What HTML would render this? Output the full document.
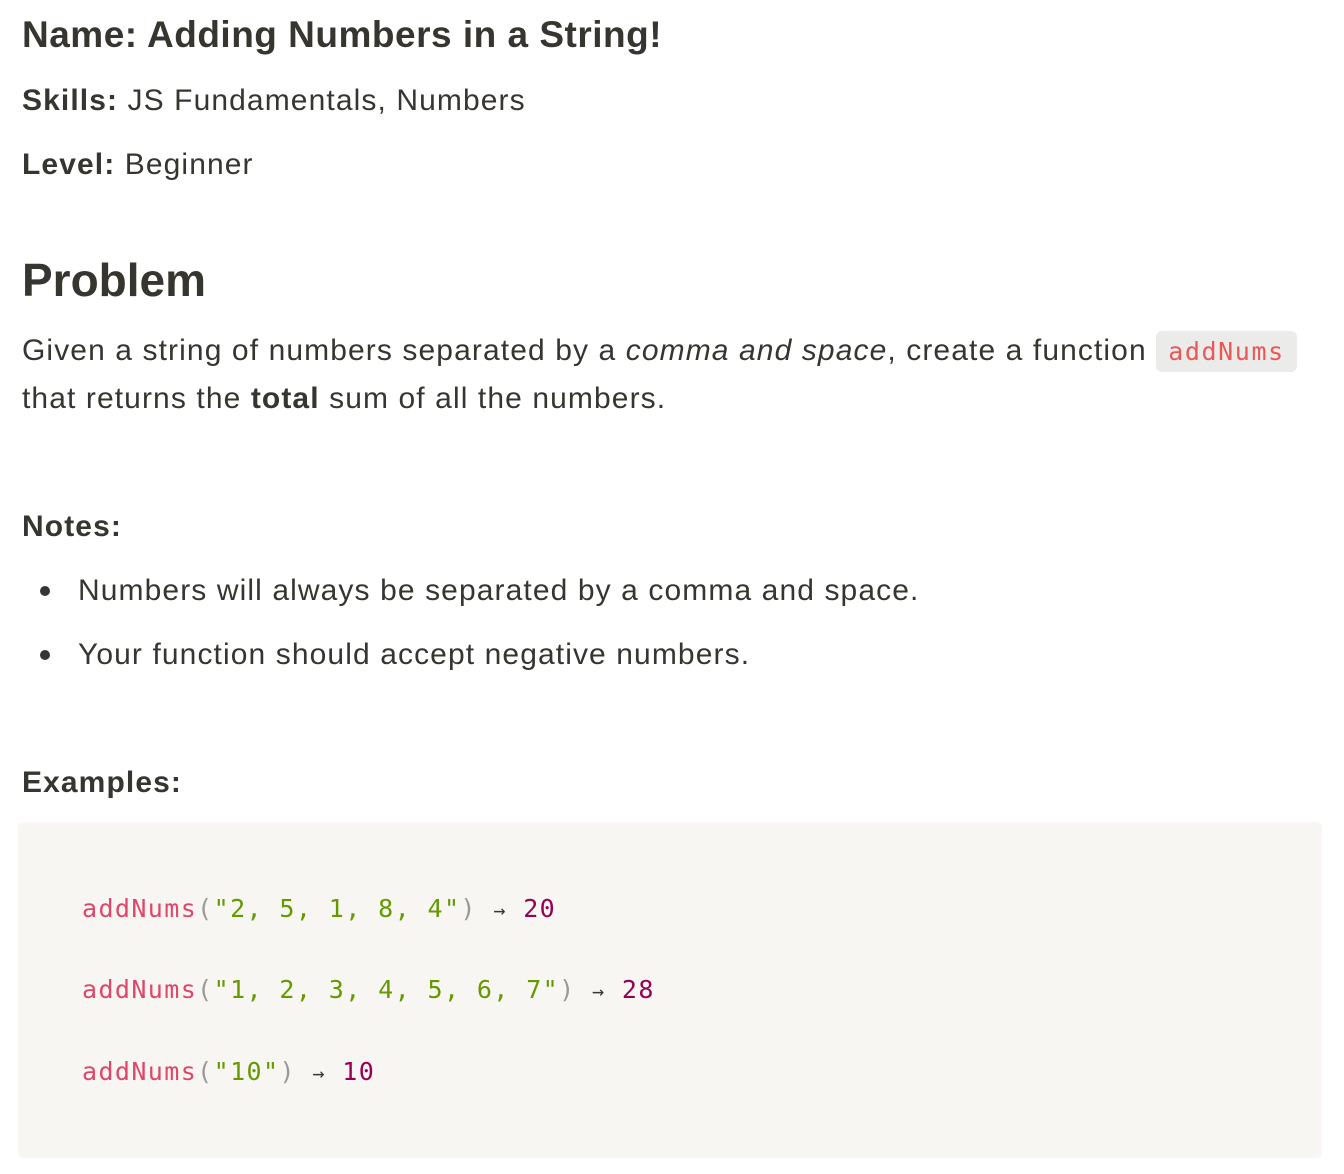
<!DOCTYPE html>
<html><head><meta charset="utf-8"><style>
body{margin:0;width:1344px;height:1174px;background:#fff;color:#37352f;font-family:"Liberation Sans",sans-serif;position:relative;overflow:hidden}
.t{position:absolute;left:22px;white-space:nowrap;line-height:1}
.x{font-size:30px;letter-spacing:1.1px}
.m{font-family:"DejaVu Sans Mono",monospace;font-size:25px;letter-spacing:1.4px}
.code{position:absolute;left:18px;top:822px;width:1304px;height:336px;background:#f7f6f3;border-radius:6px}
.fn{color:#e0466a}.p{color:#999}.s{color:#690}.n{color:#905}.a{color:#37352f}
.ic{background:#ebebea;color:#eb5757;border-radius:6px;padding:6px 12px;font-family:"DejaVu Sans Mono",monospace;font-size:25px;letter-spacing:1.6px}
.b{position:absolute;left:40px;width:10px;height:10px;border-radius:50%;background:#37352f}
</style></head><body>
<div class="t" style="top:16px;font-size:37px;font-weight:bold;letter-spacing:0.5px">Name: Adding Numbers in a String!</div>
<div class="t x" style="top:86px"><b>Skills:</b> JS Fundamentals, Numbers</div>
<div class="t x" style="top:150px"><b>Level:</b> Beginner</div>
<div class="t" style="top:257px;font-size:46px;font-weight:bold">Problem</div>
<div class="t x" style="top:336px">Given a string of numbers separated by a <i>comma and space</i>, create a function <span class="ic">addNums</span></div>
<div class="t x" style="top:384px">that returns the <b>total</b> sum of all the numbers.</div>
<div class="t x" style="top:512px;font-weight:bold">Notes:</div>
<div class="b" style="top:586px"></div>
<div class="t x" style="left:78px;top:576px">Numbers will always be separated by a comma and space.</div>
<div class="b" style="top:650px"></div>
<div class="t x" style="left:78px;top:640px">Your function should accept negative numbers.</div>
<div class="t x" style="top:768px;font-weight:bold">Examples:</div>
<div class="code"></div>
<div class="t m" style="left:82px;top:896px"><span class="fn">addNums</span><span class="p">(</span><span class="s">"2, 5, 1, 8, 4"</span><span class="p">)</span> <span class="a" style="font-size:20px">→</span> <span class="n">20</span></div>
<div class="t m" style="left:82px;top:977px"><span class="fn">addNums</span><span class="p">(</span><span class="s">"1, 2, 3, 4, 5, 6, 7"</span><span class="p">)</span> <span class="a" style="font-size:20px">→</span> <span class="n">28</span></div>
<div class="t m" style="left:82px;top:1059px"><span class="fn">addNums</span><span class="p">(</span><span class="s">"10"</span><span class="p">)</span> <span class="a" style="font-size:20px">→</span> <span class="n">10</span></div>
</body></html>
